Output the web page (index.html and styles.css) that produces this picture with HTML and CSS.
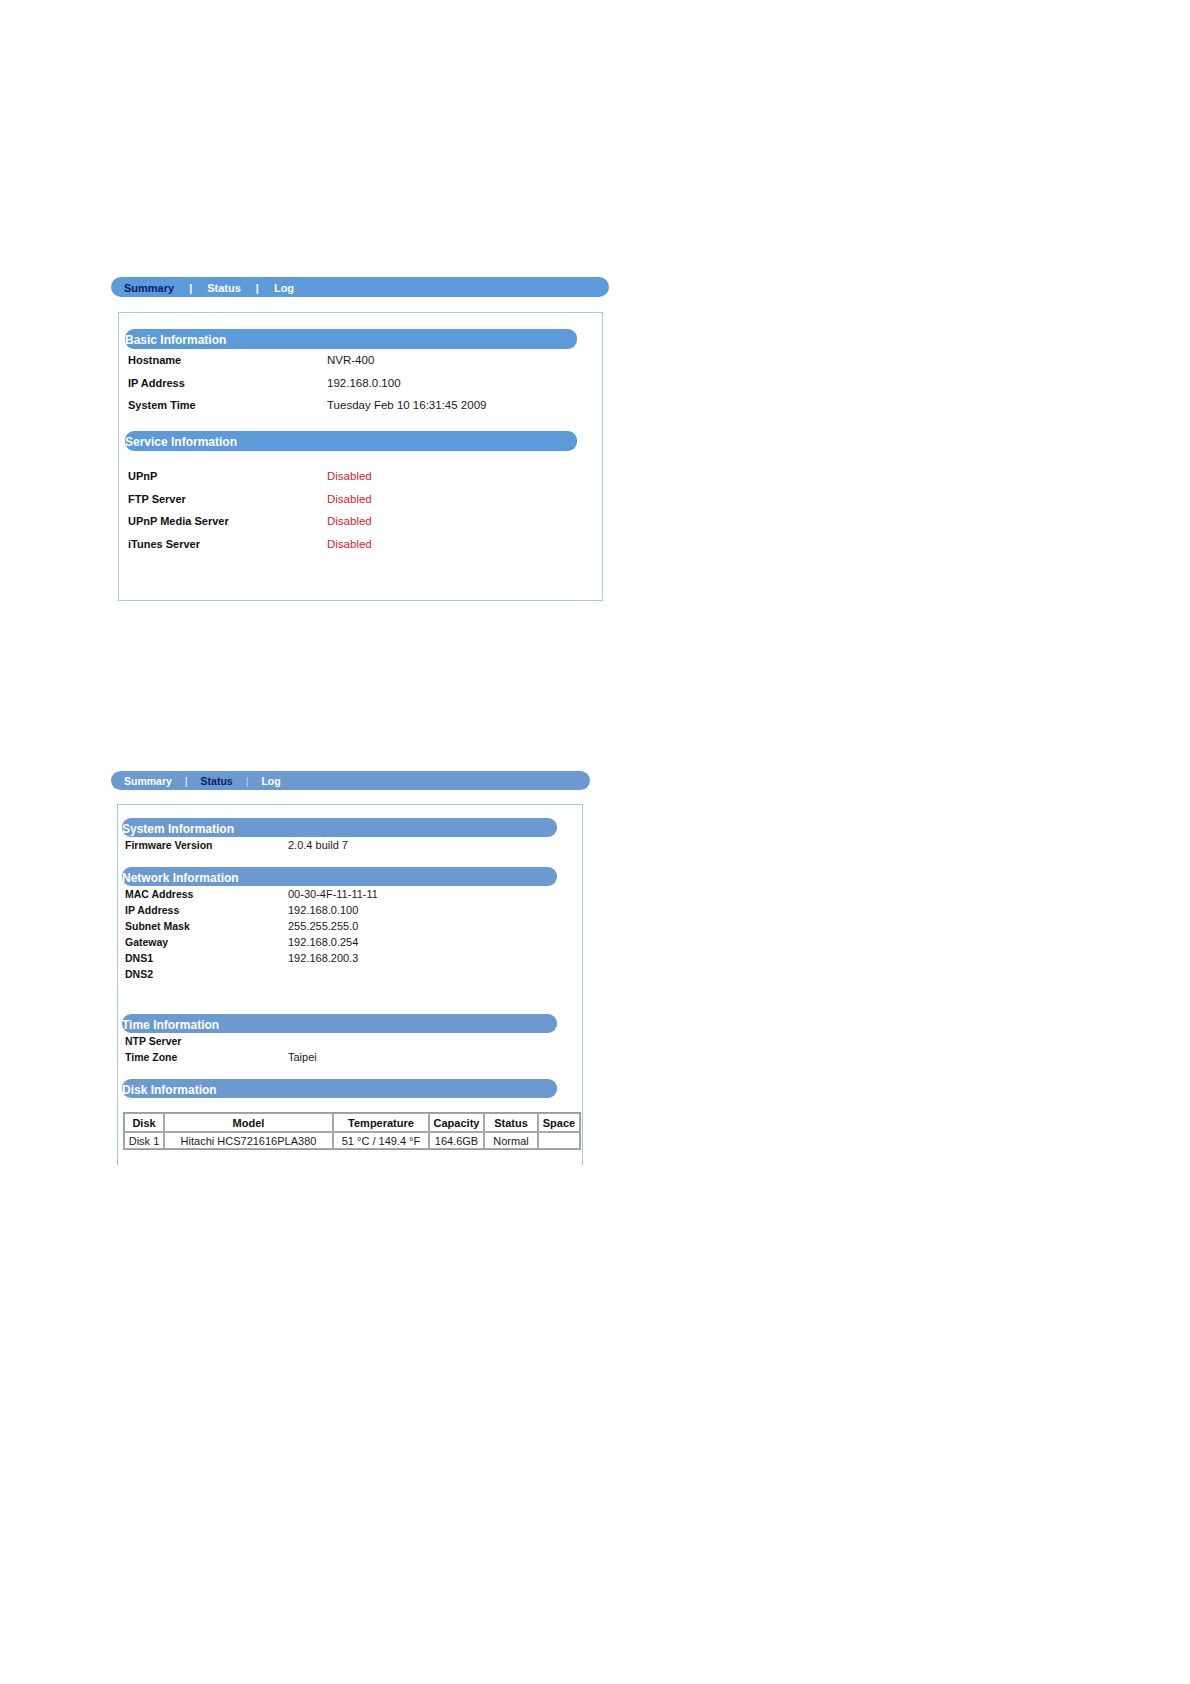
FILE: index.html
```html
<!DOCTYPE html>
<html lang="en">
<head>
    <meta charset="UTF-8">
    <title>NVR-400 | System</title>
    <link rel="stylesheet" href="styles.css">
</head>
<body>
    <!-- Summary page -->
    <section class="panel panel-summary">
        <nav class="tabs">
            <span class="tab active">Summary</span>
            <span class="sep">|</span>
            <span class="tab">Status</span>
            <span class="sep">|</span>
            <span class="tab">Log</span>
        </nav>
        <div class="box">
            <h3 class="section-title">Basic Information</h3>
            <div class="rows">
                <div class="label">Hostname</div><div class="value">NVR-400</div>
                <div class="label">IP Address</div><div class="value">192.168.0.100</div>
                <div class="label">System Time</div><div class="value">Tuesday Feb 10 16:31:45 2009</div>
            </div>
            <h3 class="section-title">Service Information</h3>
            <div class="rows service">
                <div class="label">UPnP</div><div class="value off">Disabled</div>
                <div class="label">FTP Server</div><div class="value off">Disabled</div>
                <div class="label">UPnP Media Server</div><div class="value off">Disabled</div>
                <div class="label">iTunes Server</div><div class="value off">Disabled</div>
            </div>
        </div>
    </section>

    <!-- Status page -->
    <section class="panel panel-status">
        <nav class="tabs">
            <span class="tab">Summary</span>
            <span class="sep">|</span>
            <span class="tab active">Status</span>
            <span class="sep sep-dim">|</span>
            <span class="tab">Log</span>
        </nav>
        <div class="box">
            <h3 class="section-title">System Information</h3>
            <div class="rows">
                <div class="label">Firmware Version</div><div class="value">2.0.4 build 7</div>
            </div>
            <h3 class="section-title">Network Information</h3>
            <div class="rows">
                <div class="label">MAC Address</div><div class="value">00-30-4F-11-11-11</div>
                <div class="label">IP Address</div><div class="value">192.168.0.100</div>
                <div class="label">Subnet Mask</div><div class="value">255.255.255.0</div>
                <div class="label">Gateway</div><div class="value">192.168.0.254</div>
                <div class="label">DNS1</div><div class="value">192.168.200.3</div>
                <div class="label">DNS2</div><div class="value"></div>
            </div>
            <h3 class="section-title time-title">Time Information</h3>
            <div class="rows">
                <div class="label">NTP Server</div><div class="value"></div>
                <div class="label">Time Zone</div><div class="value">Taipei</div>
            </div>
            <h3 class="section-title">Disk Information</h3>
            <table class="disks">
                <colgroup>
                    <col style="width:40px"><col style="width:169px"><col style="width:96px">
                    <col style="width:55px"><col style="width:54px"><col style="width:42px">
                </colgroup>
                <thead>
                    <tr><th>Disk</th><th>Model</th><th>Temperature</th><th>Capacity</th><th>Status</th><th>Space</th></tr>
                </thead>
                <tbody>
                    <tr><td>Disk 1</td><td>Hitachi HCS721616PLA380</td><td>51 &deg;C / 149.4 &deg;F</td><td>164.6GB</td><td>Normal</td><td></td></tr>
                </tbody>
            </table>
        </div>
    </section>
</body>
</html>
```

FILE: styles.css
```css
/* base */
* {
    margin: 0;
    padding: 0;
    box-sizing: border-box;
}

body {
    background: #fff;
    font-family: 'Liberation Sans', Arial, sans-serif;
    color: #111;
    min-height: 1684px;
}

/* panels */
.panel {
    margin-left: 111px;
}

.panel-summary {
    padding-top: 277px;
}

.panel-status {
    padding-top: 170px;
}

/* tab bar */
.tabs {
    display: flex;
    align-items: center;
    border-radius: 10px;
    color: #fff;
    font-weight: bold;
    white-space: nowrap;
}

.panel-summary .tabs {
    width: 498px;
    height: 20px;
    padding: 2px 0 0 13px;
    background: #5b9bd9;
    font-size: 11px;
}

.panel-status .tabs {
    width: 479px;
    height: 19px;
    padding: 1px 0 0 13px;
    background: #6a9ad0;
    font-size: 10.5px;
}

.tab.active {
    color: #0c1a6e;
}

.panel-summary .sep {
    margin: 0 15px;
}

.panel-status .sep {
    margin: 0 13px;
    font-weight: normal;
}

.sep-dim {
    color: #cfc4f4;
}

/* content box */
.box {
    border: 1px solid #a9cbea;
}

.panel-summary .box {
    width: 485px;
    height: 289px;
    margin: 15px 0 0 7px;
    padding: 16px 0 0 6px;
}

.panel-status .box {
    width: 466px;
    height: 361px;
    margin: 14px 0 0 6px;
    padding: 13px 0 0 4px;
    border-bottom: none;
    border-color: #a4c4e4;
}

/* blue section header */
.section-title {
    color: #fff;
    font-size: 12px;
    font-weight: bold;
    border-radius: 9px;
    display: flex;
    align-items: center;
    padding-top: 2px;
}

.panel-summary .section-title {
    width: 452px;
    height: 20px;
    background: #5b9bd9;
}

.panel-status .section-title {
    width: 435px;
    height: 19px;
    background: #6a9ad0;
}

/* key/value rows */
.rows {
    display: grid;
}

.panel-summary .rows {
    grid-template-columns: 199px 1fr;
    grid-auto-rows: 22.5px;
    padding-left: 3px;
    margin-bottom: 14.5px;
    font-size: 11px;
}

.panel-summary .value {
    font-size: 11.5px;
}

.panel-summary .rows.service {
    margin-top: 14px;
}

.panel-status .rows {
    grid-template-columns: 163px 1fr;
    grid-auto-rows: 16px;
    padding-left: 3px;
    margin-bottom: 14px;
    font-size: 11px;
}

.panel-status .time-title {
    margin-top: 32px;
}

.label {
    font-weight: bold;
    display: flex;
    align-items: center;
}

.panel-status .label {
    font-size: 10.5px;
}

.value {
    display: flex;
    align-items: center;
    color: #1a1a1a;
}

.value.off {
    color: #e0202a;
}

/* disk table */
.disks {
    width: 456px;
    margin: 14px 0 0 1px;
    table-layout: fixed;
    border-collapse: separate;
    border-spacing: 0;
    border: 1px solid #9c9c9c;
    font-size: 11px;
}

.disks th,
.disks td {
    border: 1px solid #a8a8a8;
    text-align: center;
    white-space: nowrap;
    overflow: hidden;
}

.disks th {
    height: 19px;
    font-weight: bold;
}

.disks td {
    height: 17px;
    color: #1a1a1a;
}
```
